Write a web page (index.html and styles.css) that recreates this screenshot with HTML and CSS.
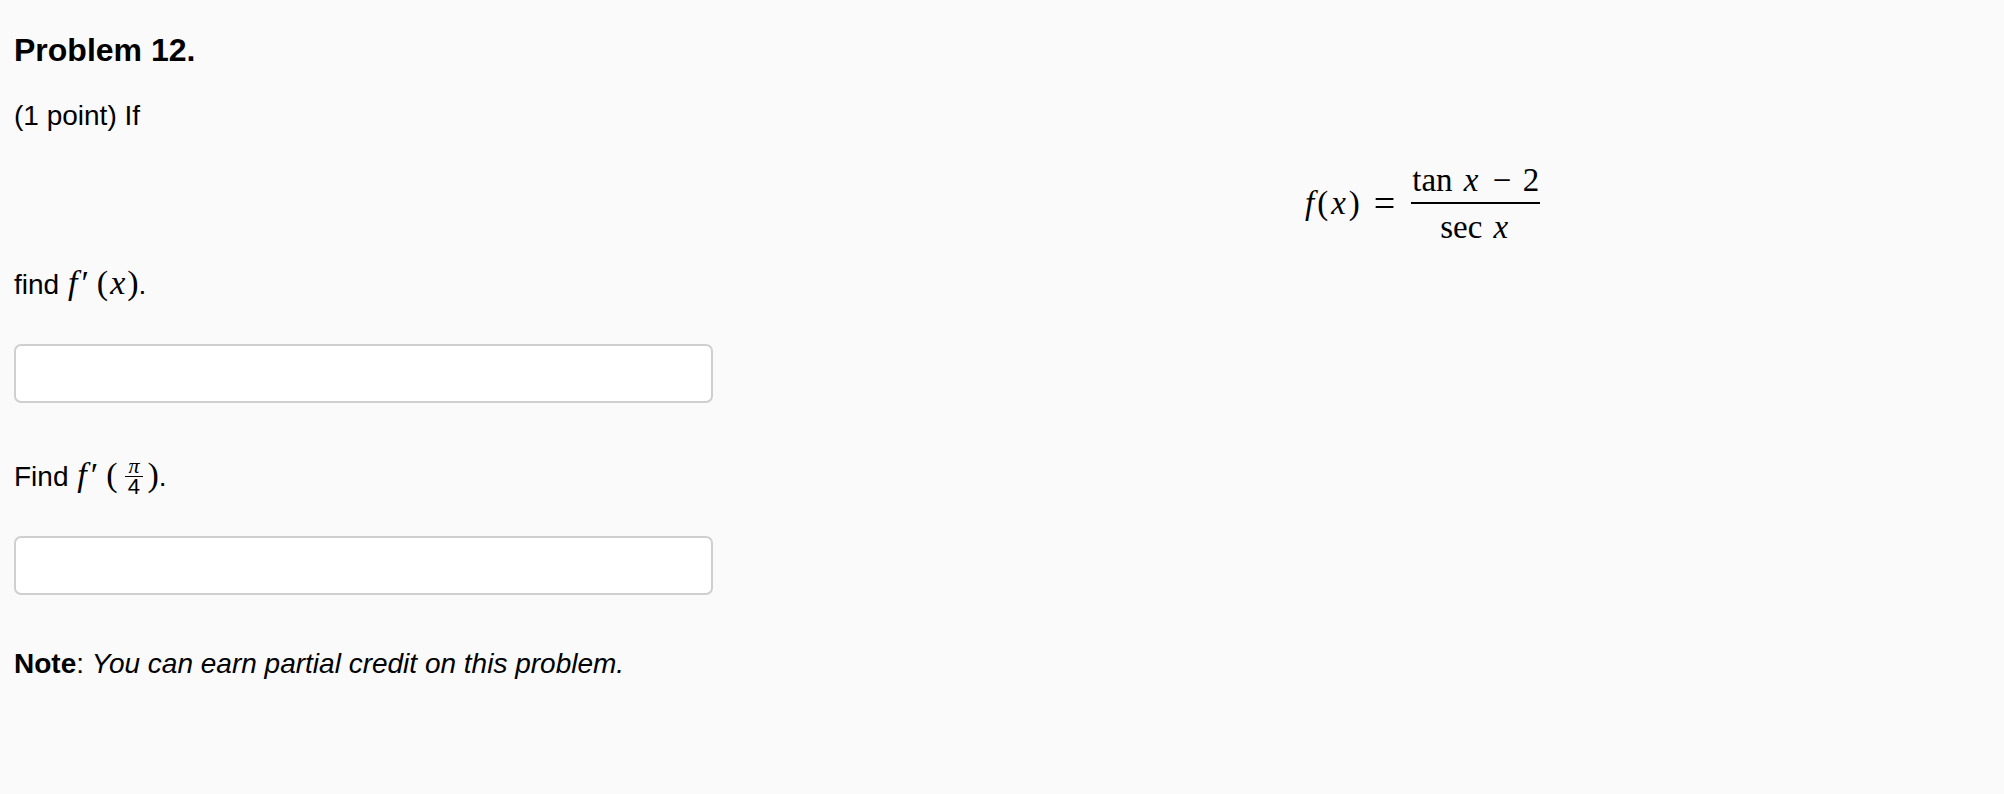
FILE: index.html
```html
<!DOCTYPE html>
<html>
<head>
<meta charset="utf-8">
<link rel="stylesheet" href="styles.css">
</head>
<body>
<div class="problem">
  <h3 class="title">Problem 12.</h3>
  <p class="intro">(1 point) If</p>
  <div class="display">
    <span class="m big"><i class="f">f</i>(<i>x</i>)<span class="eq">=</span><span class="frac"><span class="num">tan <i>x</i> <span class="op">−</span> 2</span><span class="den">sec <i>x</i></span></span></span>
  </div>
  <p class="q">find <span class="m"><i class="f">f</i><span class="prime">′</span>(<i>x</i>)</span>.</p>
  <div class="answer"><input class="box" type="text"></div>
  <p class="q">Find <span class="m"><i class="f">f</i><span class="prime">′</span>(<span class="sfrac"><span class="snum"><i>π</i></span><span class="sden">4</span></span>)</span>.</p>
  <div class="answer"><input class="box" type="text"></div>
  <p class="note"><b>Note</b>: <i>You can earn partial credit on this problem.</i></p>
</div>
</body>
</html>
```
FILE: styles.css
```css
html, body {
  margin: 0;
  background: #fafafa;
}
body {
  font-family: "Liberation Sans", Arial, sans-serif;
  color: #000;
}
.problem {
  padding: 0 14px;
}
.title {
  font-size: 32px;
  font-weight: bold;
  margin: 0;
  padding-top: 32px;
  line-height: 36px;
}
.intro, .q, .note {
  font-size: 28px;
  line-height: 32px;
  margin: 0;
}
.intro {
  margin-top: 32px;
}
.display {
  padding-left: 1290px;
  margin-top: 24px;
  margin-bottom: 17px;
  height: 94px;
  display: flex;
  align-items: center;
}
.m {
  font-family: "Liberation Serif", "Times New Roman", serif;
  font-size: 34px;
}
.m.big {
  font-size: 33px;
  display: flex;
  align-items: center;
}
.m i {
  font-style: italic;
  padding: 0 2px;
}
.m.big i {
  padding: 0 3px;
}
.m i.f {
  padding: 0 3px 0 1px;
}
.eq {
  font-size: 38px;
  margin: 0 16px 0 14px;
}
.op {
  margin: 0 3px;
}
.frac {
  display: inline-flex;
  flex-direction: column;
  text-align: center;
}
.num {
  border-bottom: 2px solid #000;
  padding: 0 1px 5px;
  line-height: 34px;
}
.den {
  padding-top: 6px;
  line-height: 34px;
}
.prime {
  margin-left: 1px;
  margin-right: 8px;
}
.sfrac {
  display: inline-flex;
  flex-direction: column;
  vertical-align: 13px;
  font-size: 22px;
  line-height: 20px;
  text-align: center;
  margin: 0 5px -10px 8px;
}
.snum {
  border-bottom: 1px solid #000;
  padding: 0 1px;
}
.sfrac .sden {
  font-family: "Liberation Sans", Arial, sans-serif;
}
.answer {
  margin-top: 43px;
  margin-bottom: 53px;
}
.box {
  display: block;
  box-sizing: border-box;
  width: 699px;
  height: 59px;
  margin: 0;
  border: 2px solid #cfcfcf;
  border-radius: 7px;
  background: #fff;
  font-size: 26px;
  padding: 4px 10px;
  outline: none;
}
.note b {
  font-weight: bold;
}
```
